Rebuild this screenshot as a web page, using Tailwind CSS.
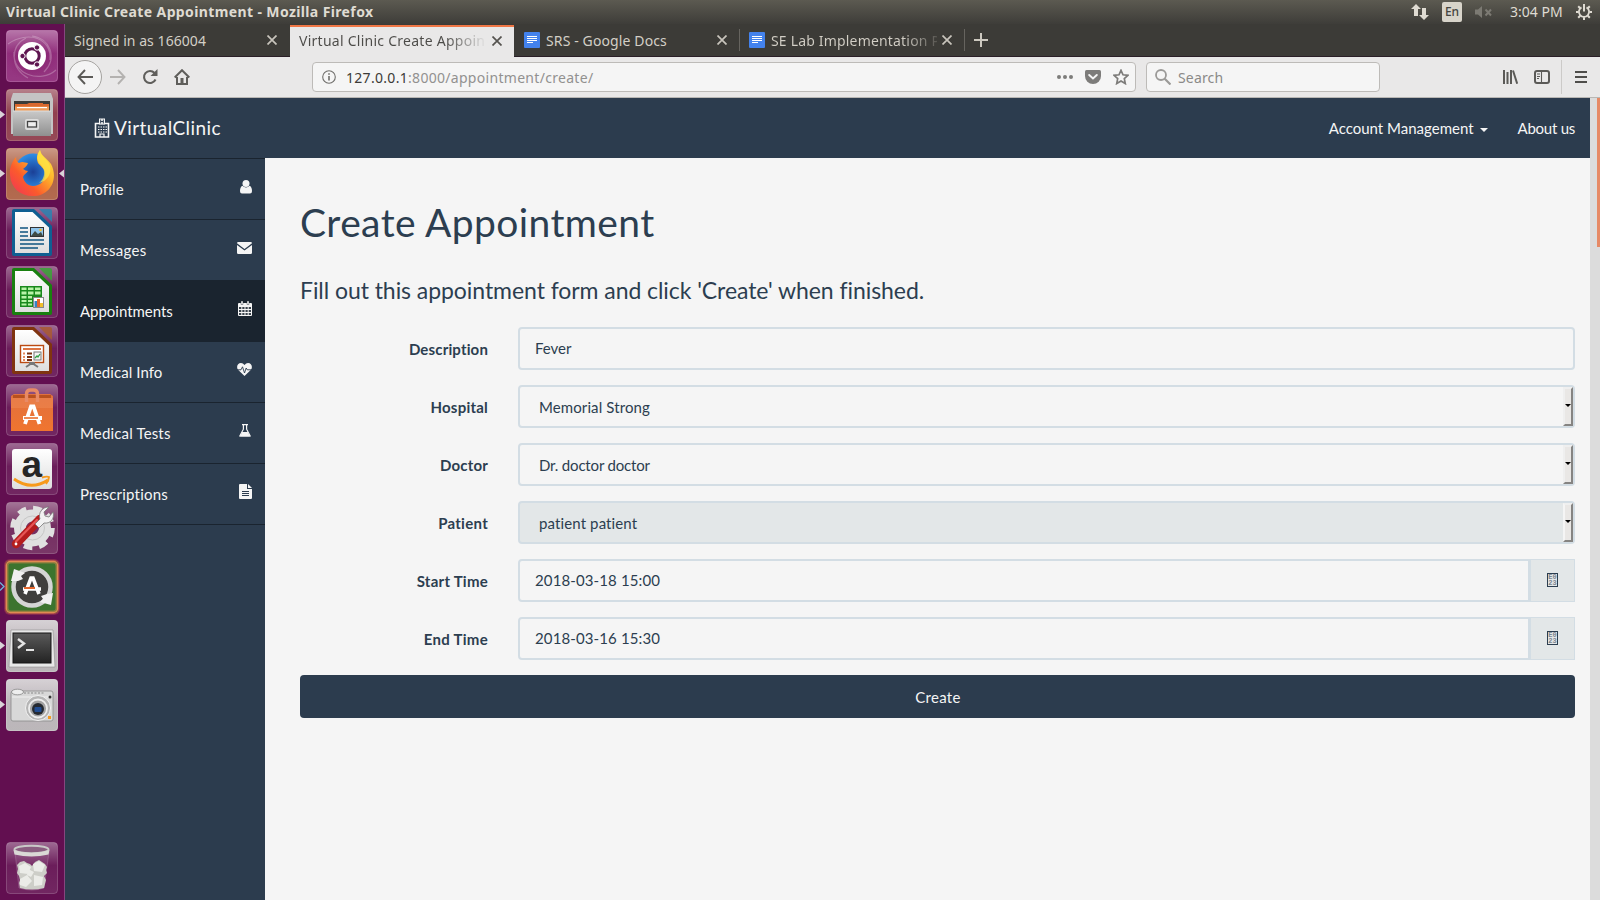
<!DOCTYPE html>
<html lang="en">
<head>
<meta charset="utf-8">
<title>Virtual Clinic Create Appointment</title>
<script src="https://cdn.jsdelivr.net/npm/@tailwindcss/browser@4"></script>
</head>
<body class="flex h-[900px] w-[1600px] flex-col overflow-hidden bg-[#f5f5f5] font-['Noto_Sans',sans-serif]">

<!-- shared gradients and tile chrome -->
<svg class="absolute h-0 w-0" aria-hidden="true">
  <defs>
    <linearGradient id="gloss" x1="0" y1="0" x2="0" y2="1"><stop offset="0" stop-color="#fff" stop-opacity=".38"/><stop offset=".45" stop-color="#fff" stop-opacity=".06"/><stop offset="1" stop-color="#fff" stop-opacity=".1"/></linearGradient>
    <linearGradient id="steel" x1="0" y1="0" x2="0" y2="1"><stop offset="0" stop-color="#c9c9c9"/><stop offset="1" stop-color="#8f8f8f"/></linearGradient>
    <linearGradient id="silver" x1="0" y1="0" x2="0" y2="1"><stop offset="0" stop-color="#bdb5bb"/><stop offset="1" stop-color="#b4afb2"/></linearGradient>
    <linearGradient id="paper" x1="0" y1="0" x2="0" y2="1"><stop offset="0" stop-color="#fff"/><stop offset="1" stop-color="#dedede"/></linearGradient>
    <linearGradient id="fox" x1="1" y1="0" x2="0" y2="1"><stop offset="0" stop-color="#fff04a"/><stop offset=".35" stop-color="#ffb32a"/><stop offset=".65" stop-color="#fb5b2c"/><stop offset="1" stop-color="#f0305c"/></linearGradient>
    <linearGradient id="bag" x1="0" y1="0" x2="0" y2="1"><stop offset="0" stop-color="#e0703f"/><stop offset="1" stop-color="#f0752f"/></linearGradient>
    <radialGradient id="globe"><stop offset="0" stop-color="#1b3f96"/><stop offset="1" stop-color="#2e8fe8"/></radialGradient>
    <radialGradient id="dash"><stop offset="0" stop-color="#7d0f63"/><stop offset="1" stop-color="#8b2375"/></radialGradient>
    <linearGradient id="screen" x1="0" y1="0" x2="0" y2="1"><stop offset="0" stop-color="#5a5a5a"/><stop offset="1" stop-color="#232323"/></linearGradient>
    <g id="tile"><rect x=".5" y=".5" width="51" height="51" rx="3.500" fill="url(#gloss)" stroke="#fff" stroke-opacity=".2"/></g>
    <g id="docpage"><path d="M9 5h17.500L43 20.500V46H9z" fill="url(#paper)"/></g>
  </defs>
</svg>

<!-- desktop panel -->
<header class="flex h-6 shrink-0 items-center bg-linear-to-b from-[#5c5a51] to-[#3e3d39] pl-[6px] text-[#dfdbd2]">
  <div class="w-[1405px] whitespace-nowrap text-[14px] font-bold leading-6 tracking-[0.38px]">Virtual Clinic Create Appointment - Mozilla Firefox</div>
  <svg class="h-4 w-[18px]" viewBox="0 0 18 16" fill="#dfdbd2"><path d="M5 0l5 5H7v7H3V5H0zM13 16l5-5h-3V4h-4v7H8z"/></svg>
  <div class="ml-[13px] h-5 w-5 rounded-[2px] bg-[#d8d4ca] text-center text-[12px] font-medium leading-5 text-[#45443f]">En</div>
  <svg class="ml-[13px] h-[14px] w-[18px]" viewBox="0 0 18 14"><path d="M0 4.500h3l4-3.500v12L3 9.500H0z" fill="#7c7a73"/><path d="M10.500 4.500l5.500 6M16 4.500l-5.500 6" stroke="#7c7a73" stroke-width="2"/></svg>
  <div class="ml-[17px] w-[54px] whitespace-nowrap text-[14px] leading-6">3:04 PM</div>
  <svg class="ml-[12px] h-4 w-4" viewBox="0 0 16 16" fill="none" stroke="#dfdbd2"><path d="M5.500 3.400a5.100 5.100 0 1 0 5 0" stroke-width="1.800"/><path d="M8 0v7.500M0 8h2.600M13.400 8H16M8 13.300V16M2.200 2.200l2 2M13.800 2.200l-2 2M2.200 13.800l2-2M13.800 13.800l-2-2" stroke-width="2"/></svg>
</header>

<div class="flex min-h-0 flex-1">
  <!-- launcher -->
  <aside class="relative flex w-[65px] shrink-0 flex-col gap-[7px] border-r border-[#86467f] bg-[#620f50] pb-[6px] pl-[6px] pt-[6px]">
    <svg class="h-[52px] w-[52px] shrink-0" viewBox="0 0 52 52"><rect width="52" height="52" rx="4" fill="url(#dash)"/><g fill="none" stroke="#fff" stroke-opacity=".25" stroke-width="1.200"><path d="M2 14C22 0 46 8 44 30M50 40C34 54 6 44 8 22M26 6c18 2 26 22 12 36M22 48C4 38 4 16 20 8"/></g><use href="#tile"/><circle cx="26" cy="26" r="14" fill="#fff"/><circle cx="26" cy="26" r="7.200" fill="none" stroke="#5e1550" stroke-width="3"/><g fill="#5e1550" stroke="#fff" stroke-width="1"><circle cx="16.500" cy="26" r="2.700"/><circle cx="31" cy="17.500" r="2.700"/><circle cx="31" cy="34.500" r="2.700"/></g></svg>
    <svg class="h-[52px] w-[52px] shrink-0" viewBox="0 0 52 52"><rect width="52" height="52" rx="4" fill="#8a3444"/><use href="#tile"/><path d="M7 4h38l2 6v35H5V10z" fill="#c4c4c4"/><path d="M8 12h36v12H8z" fill="#3b3b38"/><path d="M9 15h12l2-1h14v1h6v8H9z" fill="#d9682f"/><path d="M9 17.500h34V22H9z" fill="#f09a55"/><path d="M11 18h30v1.200H11z" fill="#fff"/><path d="M7 22h38v25H7z" fill="url(#steel)"/><path d="M7 22h38" stroke="#ddd"/><rect x="19" y="30" width="14" height="11" rx="2" fill="#ddd"/><rect x="21.500" y="32.500" width="9" height="5.500" fill="#eee" stroke="#444" stroke-width="1.300"/></svg>
    <svg class="h-[52px] w-[52px] shrink-0" viewBox="0 0 52 52"><rect width="52" height="52" rx="4" fill="#aa5a3c"/><use href="#tile"/><circle cx="27" cy="24" r="18.500" fill="url(#globe)"/><path d="M4 27C3 20 7 12 10 9c0 3 1 5 3 6 4-2 6 0 9 0-1 3-3 4-5 6 2 1 3 2 5 2-2 3-4 3-5 6 1 5 5 9 10 9 8 0 13-6 12-14-1-4-5-6-7-9-2-5-1-9 2-13 1 6 7 8 11 14 8 15-1 32-18 32C14 48 5 40 4 27z" fill="url(#fox)"/><path d="M34 2c-4 6-3 11 1 15 5 5 4 14-2 18 8-2 13-9 11-17-2-7-9-9-10-16z" fill="#ffe545" fill-opacity=".75"/></svg>
    <svg class="h-[52px] w-[52px] shrink-0" viewBox="0 0 52 52"><use href="#tile"/><path d="M8 2h20l18 17v28q0 2-2 2H8q-2 0-2-2V4q0-2 2-2z" fill="#0f5f92"/><path d="M33 2h11q2 0 2 2v11z" fill="#2a82b0" fill-opacity=".85"/><use href="#docpage"/><path d="M14 21h8M14 25h8M14 29h8M14 33h24M14 37h24M14 41h18" stroke="#0f5480" stroke-width="1.700"/><rect x="24.500" y="20.500" width="13" height="9" fill="#8fc4ea" stroke="#333"/><path d="M25 29l4-5 3 3 3-2 2 4z" fill="#3f4b44"/><circle cx="34.500" cy="23" r="1.300" fill="#f3bb29"/></svg>
    <svg class="h-[52px] w-[52px] shrink-0" viewBox="0 0 52 52"><use href="#tile"/><path d="M8 2h20l18 17v28q0 2-2 2H8q-2 0-2-2V4q0-2 2-2z" fill="#198010"/><path d="M33 2h11q2 0 2 2v11z" fill="#39a536" fill-opacity=".85"/><use href="#docpage"/><rect x="14" y="20" width="22" height="21" fill="#19891d"/><path d="M15.500 21.500h5V24h-5zM22 21.500h5.500V24H22zM29 21.500h5.500V24H29zM15.500 25.500h5v3h-5zM22 25.500h5.500v3H22zM29 25.500h5.500v3H29zM15.500 30h5v2.500h-5zM22 30h4v2.500h-4zM15.500 34h5v2h-5zM22 34h4v2h-4zM15.500 37.500h5v2h-5zM22 37.500h4v2h-4z" fill="#b8f3a8"/><rect x="27.500" y="31.500" width="10" height="10" fill="#fff" stroke="#888"/><path d="M28.500 35h2.500v6h-2.500z" fill="#3583c6"/><path d="M31 33h3v8h-3z" fill="#e4652c"/><path d="M34 37h3v4h-3z" fill="#f0bf2a"/></svg>
    <svg class="h-[52px] w-[52px] shrink-0" viewBox="0 0 52 52"><use href="#tile"/><path d="M8 2h20l18 17v28q0 2-2 2H8q-2 0-2-2V4q0-2 2-2z" fill="#803410"/><path d="M33 2h11q2 0 2 2v11z" fill="#a95a31" fill-opacity=".85"/><use href="#docpage"/><rect x="14.500" y="20.500" width="23" height="17" fill="#fff" stroke="#bb4a12" stroke-width="1.400"/><path d="M17 24h18" stroke="#d9652d" stroke-width="1.800"/><path d="M17 28.500h2M17 32h2M17 35h2" stroke="#e58a5b" stroke-width="2"/><path d="M21 28.500h5M21 32h5M21 35h5" stroke="#7a3210" stroke-width="2"/><rect x="28" y="27" width="7" height="8" fill="#f5f5f5" stroke="#777"/><path d="M29 33l2-2 1 1 2-3" fill="none" stroke="#2fa044" stroke-width="1.300"/><path d="M26 38l-6 4M26 38l6 4M23 38h6" stroke="#777" stroke-width="2"/></svg>
    <svg class="h-[52px] w-[52px] shrink-0" viewBox="0 0 52 52"><use href="#tile"/><path d="M5 12l3-2h36l3 2v35H5z" fill="url(#bag)"/><path d="M7 11h38v3H7z" fill="#b8501f"/><path d="M5 14h42v10H5z" fill="#f08a54" fill-opacity=".5"/><path d="M20.500 18V10q0-4 4-4h3q4 0 4 4v8" fill="none" stroke="#e88a66" stroke-width="3.400"/><path d="M19 40l6-17.500h2.500L33.500 40M17 34h19" fill="none" stroke="#fff" stroke-width="3.800"/><path d="M18 34h14" stroke="#e8641f" stroke-width="1.500"/></svg>
    <svg class="h-[52px] w-[52px] shrink-0" viewBox="0 0 52 52"><use href="#tile"/><rect x="6" y="6" width="40" height="40" rx="3" fill="url(#paper)"/><text x="15.500" y="34" font-family="Liberation Sans" font-weight="700" font-size="37" fill="#262626">a</text><path d="M8 36q17 12 34 1" fill="none" stroke="#f79a1c" stroke-width="2.800"/><path d="M36 34.500q5-1.500 7-.5 0 3-3 7" fill="none" stroke="#f79a1c" stroke-width="1.900"/></svg>
    <svg class="h-[52px] w-[52px] shrink-0" viewBox="0 0 52 52"><rect width="52" height="52" rx="4" fill="#6b2157"/><use href="#tile"/><circle cx="26.500" cy="26" r="12.500" fill="none" stroke="#e0e0e0" stroke-width="12"/><circle cx="26.500" cy="26" r="19.800" fill="none" stroke="#e0e0e0" stroke-width="5" stroke-dasharray="8.600 6.951"/><circle cx="26.500" cy="26" r="12" fill="none" stroke="#c6c6c6" stroke-width="1"/><path d="M10 42L34 17" stroke="#b51d1d" stroke-width="8.500" stroke-linecap="round"/><path d="M10 39.500L31 18" stroke="#e65555" stroke-width="2.200" stroke-linecap="round"/><path d="M29 22l5-5c-2-6 2-12 9-12l-5 5 1 4 4 1 4-5c2 7-3 12-9 11l-5 5z" fill="#f2f2f2" stroke="#777" stroke-width=".8"/><circle cx="10" cy="42" r="1.400" fill="#fff"/></svg>
    <svg class="h-[52px] w-[52px] shrink-0 overflow-visible" viewBox="0 0 52 52"><rect x="-2" y="-2" width="56" height="56" rx="6" fill="#e4724a" fill-opacity=".25"/><rect x="-1" y="-1" width="54" height="54" rx="5" fill="#e4724a" fill-opacity=".45"/><rect width="52" height="52" rx="4" fill="#3c742e"/><rect x=".5" y=".5" width="51" height="51" rx="4" fill="none" stroke="#e08a52" stroke-width="1.400"/><rect x="1.800" y="1.800" width="48.400" height="48.400" rx="3" fill="none" stroke="#e08a52" stroke-opacity=".45" stroke-width="1.400"/><circle cx="26" cy="26" r="18.500" fill="#403f3d" stroke="#d5d5d5" stroke-width="4.500"/><path d="M5 20l3-12 11 4-4 3 2 3-5 2zM47 32l-2 12-11-3 3-3-2-3 6-2z" fill="#f0f0f0"/><path d="M19 33l6-16h2l6 16M17 28h18" fill="none" stroke="#fff" stroke-width="3.600"/><path d="M18 27h11" stroke="#e4662c" stroke-width="2"/></svg>
    <svg class="h-[52px] w-[52px] shrink-0" viewBox="0 0 52 52"><rect width="52" height="52" rx="4" fill="url(#silver)"/><use href="#tile"/><path d="M5 10h42l2 37H3z" fill="#e8e8e8" stroke="#8e8e8e" stroke-width=".6"/><rect x="7" y="13" width="38" height="30" fill="url(#screen)" stroke="#151515"/><path d="M12 19l6 4.500-6 4.500" fill="none" stroke="#e4e4e4" stroke-width="2.400"/><path d="M20 30h8" stroke="#e4e4e4" stroke-width="2"/></svg>
    <svg class="h-[52px] w-[52px] shrink-0" viewBox="0 0 52 52"><rect width="52" height="52" rx="4" fill="url(#silver)"/><use href="#tile"/><rect x="5" y="12" width="42" height="30" rx="2" fill="#d8d8d8" stroke="#8b8b8b" stroke-width=".8"/><path d="M6 18h40" stroke="#f0f0f0"/><ellipse cx="11.500" cy="13" rx="6" ry="2.800" fill="#eee" stroke="#888" stroke-width=".8"/><path d="M18 14h20" stroke="#888" stroke-width="1.200" stroke-dasharray="2 1.500"/><circle cx="32" cy="29" r="12.500" fill="#b5b5b5" stroke="#f2f2f2"/><circle cx="32" cy="29.500" r="9" fill="#a2a2a2" stroke="#eee" stroke-width="1.800"/><circle cx="32" cy="30" r="6" fill="#252a31"/><rect x="28.500" y="28" width="7" height="5" rx="1" fill="#224d91"/><circle cx="44" cy="18" r="1.500" fill="#333"/><rect x="42" y="37" width="3" height="3" fill="#f49a20"/></svg>
    <svg class="mt-auto h-[52px] w-[52px] shrink-0" viewBox="0 0 52 52"><use href="#tile"/><path d="M9 10l4 36q13 4 25 0l5-36z" fill="#fff" fill-opacity=".08" stroke="#ba8bb0" stroke-opacity=".6" stroke-width=".6"/><path d="M11 23l3-3 4-1 3 2 3 1 2 2 3-4 4-2 3 2 3 2 2 3-1 3 1 3-3 3 2 4-1 4-1 4q-12 3-24 0l-1-5 1-3-1-4-2-3 1-4z" fill="#cdcec8"/><path d="M13 24l6-3 6 4-3 7-8-1zM27 22l6-3 6 4-3 7-8-1zM14 37l7-4 5 6-6 6-6-2zM28 33l9 2-1 8-8 1zM22 27l6 3-3 5-4-2z" fill="#ebece8"/><ellipse cx="25.500" cy="7.500" rx="17" ry="3.800" fill="#8a5e80" stroke="#c9c9c7" stroke-width="2"/><path d="M7.500 8q18 6 36 0l-1 4.500q-17 4-34 0z" fill="#dad9d6"/></svg>
    <!-- running markers -->
    <svg class="absolute left-0 top-0 h-[876px] w-16" viewBox="0 0 64 876" fill="#d9d3d8"><path d="M0 86.500l5 4-5 4zM0 145.500l5 4-5 4zM64 145.500l-5 4 5 4zM0 617.500l5 4-5 4zM0 676.500l5 4-5 4z"/><path d="M0 558.500l4 4-4 4" fill="none" stroke="#6db3dc" stroke-width="1.300"/></svg>
  </aside>

  <!-- browser window -->
  <div class="flex min-w-0 flex-1 flex-col">
    <div class="flex h-[33px] shrink-0 border-b border-[#2a1f27] bg-[#3c3b37] text-[14px] text-[#d3cfc6]">
      <div class="flex w-[225px] items-center pl-[9px] pr-[13px]">
        <span class="flex-1 whitespace-nowrap pt-[2px] leading-[30px] tracking-[0.06px]">Signed in as 166004</span>
        <svg class="h-[10px] w-[10px]" viewBox="0 0 10 10"><path d="M.5 .5l9 9M9.500 .5l-9 9" stroke="#c8c4bc" stroke-width="1.700"/></svg>
      </div>
      <div class="-mb-px mt-px flex w-[224px] items-center border-t-2 border-[#f07746] bg-[#e9e8e8] pb-[3px] pl-[9px] pr-[12px] text-[#45443f]">
        <span class="w-[188px] whitespace-nowrap bg-linear-to-r from-[#4c4b48] from-78% to-transparent bg-clip-text leading-7 tracking-[0.26px] text-transparent">Virtual Clinic Create Appoin</span>
        <svg class="ml-[5px] h-[10px] w-[10px] shrink-0" viewBox="0 0 10 10"><path d="M.5 .5l9 9M9.500 .5l-9 9" stroke="#55534f" stroke-width="1.700"/></svg>
      </div>
      <div class="flex w-[225px] items-center pl-[10px] pr-[12px]">
        <svg class="h-4 w-4" viewBox="0 0 16 16"><rect width="16" height="16" rx="1" fill="#4382ed"/><path d="M3 4.500h10M3 6.500h10M3 8.500h10M3 10.500h6" stroke="#fff"/></svg>
        <span class="flex-1 whitespace-nowrap pl-[6px] pt-[2px] leading-[30px] tracking-[0.12px]">SRS - Google Docs</span>
        <svg class="h-[10px] w-[10px]" viewBox="0 0 10 10"><path d="M.5 .5l9 9M9.500 .5l-9 9" stroke="#c8c4bc" stroke-width="1.700"/></svg>
      </div>
      <div class="my-[5px] w-px bg-[#66645f]"></div>
      <div class="flex w-[224px] items-center pl-[9px] pr-[12px]">
        <svg class="h-4 w-4 shrink-0" viewBox="0 0 16 16"><rect width="16" height="16" rx="1" fill="#4382ed"/><path d="M3 4.500h10M3 6.500h10M3 8.500h10M3 10.500h6" stroke="#fff"/></svg>
        <span class="ml-[6px] w-[166px] whitespace-nowrap bg-linear-to-r from-[#d3cfc6] from-80% to-[#3c3b37] to-105% bg-clip-text pt-[2px] leading-[30px] tracking-[0.18px] text-transparent">SE Lab Implementation P</span>
        <svg class="ml-[5px] h-[10px] w-[10px] shrink-0" viewBox="0 0 10 10"><path d="M.5 .5l9 9M9.500 .5l-9 9" stroke="#c8c4bc" stroke-width="1.700"/></svg>
      </div>
      <div class="my-[5px] w-px bg-[#66645f]"></div>
      <svg class="ml-[9px] mt-[9px] h-[14px] w-[14px]" viewBox="0 0 14 14"><path d="M7 0v14M0 7h14" stroke="#cdc9c0" stroke-width="2"/></svg>
    </div>

    <div class="flex h-[41px] shrink-0 items-center border-b border-[#b9b7b4] bg-[#e9e8e8] pl-[3px]">
      <div class="flex h-[34px] w-[34px] items-center justify-center rounded-full border border-[#a5a3a0] bg-[#f4f4f4]">
        <svg class="h-4 w-4" viewBox="0 0 16 16" fill="none" stroke="#5b5a57" stroke-width="1.900"><path d="M8 1L1.500 8 8 15M1.500 8H16"/></svg>
      </div>
      <svg class="ml-[8px] h-4 w-4" viewBox="0 0 16 16" fill="none" stroke="#b4b2b0" stroke-width="1.900"><path d="M8 1l6.500 7L8 15M14.500 8H0"/></svg>
      <svg class="ml-[16px] h-4 w-4" viewBox="0 0 16 16"><path d="M13.500 10.500A6 6 0 1 1 12.500 4" fill="none" stroke="#5f5e5b" stroke-width="2.100"/><path d="M15.500 0v7h-7z" fill="#5f5e5b"/></svg>
      <svg class="ml-[16px] h-4 w-4" viewBox="0 0 16 16"><path d="M.7 8.500L8 1.200l7.300 7.300M3 8v7h10V8" fill="none" stroke="#5f5e5b" stroke-width="2"/><path d="M6.500 9h3v6h-3z" fill="#5f5e5b"/></svg>

      <div class="ml-[122px] flex h-[30px] w-[824px] items-center rounded-[4px] border border-[#bdbbb8] bg-[#f5f5f5] pl-[9px] pr-[6px]">
        <svg class="h-[14px] w-[14px]" viewBox="0 0 14 14" fill="none" stroke="#6f6e6b"><circle cx="7" cy="7" r="6.300" stroke-width="1.100"/><path d="M7 6v4.500M7 3.200v1.600" stroke-width="1.600"/></svg>
        <div class="ml-[10px] flex-1 whitespace-nowrap pt-[2px] text-[14px] leading-[26px] tracking-[0.3px] text-[#929190]"><span class="text-[#3c3b37]">127.0.0.1</span>:8000/appointment/create/</div>
        <svg class="h-4 w-4" viewBox="0 0 16 16" fill="#7d7c7a"><circle cx="2" cy="8" r="2"/><circle cx="8" cy="8" r="2"/><circle cx="14" cy="8" r="2"/></svg>
        <svg class="ml-[12px] h-4 w-4" viewBox="0 0 16 16"><path d="M1.500 1h13q1.500 0 1.500 1.500V7a8 8 0 0 1-16 0V2.500Q0 1 1.500 1z" fill="#7d7c7a"/><path d="M4.200 6L8 9.500 11.800 6" fill="none" stroke="#f5f5f5" stroke-width="2" stroke-linecap="round"/></svg>
        <svg class="ml-[12px] h-4 w-4" viewBox="0 0 16 16"><path d="M8 1.300l2 4.500 5 .5-3.700 3.300 1 5L8 12.100l-4.300 2.500 1-5L1 6.300l5-.5z" fill="none" stroke="#7d7c7a" stroke-width="1.700"/></svg>
      </div>
      <div class="ml-[10px] flex h-[30px] w-[234px] items-center rounded-[4px] border border-[#bdbbb8] bg-[#f5f5f5] pl-[8px]">
        <svg class="h-4 w-4" viewBox="0 0 16 16" fill="none" stroke="#9b9a98"><circle cx="6" cy="6" r="5" stroke-width="1.800"/><path d="M9.700 9.700L15.500 15.500" stroke-width="2.200"/></svg>
        <span class="ml-[7px] pt-[2px] text-[14px] leading-[26px] tracking-[0.15px] text-[#8b8a88]">Search</span>
      </div>
      <svg class="ml-[122px] h-4 w-4" viewBox="0 0 16 16" stroke="#5b5a57" stroke-width="2" fill="none"><path d="M2 1v14M5.500 3v12M9 1v14M11 1.500l4.200 13.200"/></svg>
      <svg class="ml-[16px] h-4 w-4" viewBox="0 0 16 16" fill="none" stroke="#5b5a57"><rect x="1" y="2" width="14" height="12" rx="2" stroke-width="2"/><path d="M7.500 2v12M3 5h3M3 7.500h3M3 9.500h2" stroke-width="1.100"/></svg>
      <div class="ml-[11px] h-[34px] w-px bg-[#cccac8]"></div>
      <svg class="ml-[13px] h-[12px] w-[12px]" viewBox="0 0 12 12"><path d="M0 1h12M0 6h12M0 11h12" stroke="#4f4e4b" stroke-width="2"/></svg>
    </div>

    <!-- page -->
    <div class="flex min-h-0 flex-1">
      <div class="flex min-w-0 flex-1 flex-col font-[Lato,sans-serif] text-[15px] text-[#2c3e50]">
        <nav class="flex h-[60px] shrink-0 items-center bg-[#2c3c4e] pl-[29px] pr-[15px] text-[#f5f5f5]">
          <svg class="h-5 w-4" viewBox="0 0 16 20"><path d="M1.500 5.500h13v13.500h-13z" fill="none" stroke="#f5f5f5" stroke-width="1.600"/><path d="M5 .5h6v6H5z" fill="#f5f5f5"/><path d="M6.700 1.500v4M9.300 1.500v4M6.700 3.500h2.600" stroke="#2c3c4e"/><path d="M4 9h1.500M6.500 9H8M9 9h1.500M11.500 9H13M4 11.500h1.500M6.500 11.500H8M9 11.500h1.500M11.500 11.500H13M4 14h1.500M6.500 14H8M9 14h1.500M11.500 14H13" stroke="#f5f5f5" stroke-width="1.200"/><path d="M6 19v-3h4v3" fill="none" stroke="#f5f5f5" stroke-width="1.200"/></svg>
          <span class="ml-[4px] flex-1 text-[19px] leading-[60px] tracking-[0.42px]">VirtualClinic</span>
          <span class="leading-[60px]">Account Management</span>
          <svg class="ml-[6px] mt-1 h-1 w-2" viewBox="0 0 8 4" fill="#f5f5f5"><path d="M0 0h8L4 4z"/></svg>
          <span class="ml-[30px] leading-[60px] tracking-[-0.25px]">About us</span>
        </nav>
        <div class="flex min-h-0 flex-1">
          <aside class="flex w-[200px] shrink-0 flex-col bg-[#2c3c4e] text-[#f5f5f5]">
            <a class="flex h-[61px] items-center justify-between border-t border-[#1a242f] pl-[15px] pr-[13px]"><span class="tracking-[0.15px]">Profile</span><svg class="mb-1 h-[14px] w-3" viewBox="0 0 12 14" fill="#f5f5f5"><circle cx="6" cy="3.600" r="3.500"/><path d="M2.500 5.800C.5 6.500 0 9 0 11.200Q0 13.500 2 13.500h8q2 0 2-2.300C12 9 11.500 6.500 9.500 5.800 7.500 8 4.500 8 2.500 5.800z"/></svg></a>
            <a class="flex h-[61px] items-center justify-between border-t border-[#1a242f] pl-[15px] pr-[13px]"><span class="tracking-[0.3px]">Messages</span><svg class="mb-1 h-3 w-[15px]" viewBox="0 0 15 12" fill="#f5f5f5"><path d="M1.300 0h12.400Q15 0 15 1.300L7.500 7 0 1.300Q0 0 1.300 0zM0 3l7.500 5.500L15 3v7.700Q15 12 13.700 12H1.300Q0 12 0 10.700z"/></svg></a>
            <a class="flex h-[62px] items-center justify-between bg-[#1a242f] pl-[15px] pr-[13px]"><span class="tracking-[-0.03px]">Appointments</span><svg class="mb-[6px] h-[15px] w-[14px]" viewBox="0 0 14 15"><path d="M1 2h12q1 0 1 1v11q0 1-1 1H1q-1 0-1-1V3q0-1 1-1z" fill="#f5f5f5"/><path d="M3 0h2v3.500H3zM9 0h2v3.500H9z" fill="#f5f5f5" stroke="#1a242f" stroke-width=".4"/><path d="M1 6h2.300v2H1zM4.300 6h2.200v2H4.300zM7.500 6h2.200v2H7.500zM10.700 6H13v2h-2.300zM1 9h2.300v2H1zM4.300 9h2.200v2H4.300zM7.500 9h2.200v2H7.500zM10.700 9H13v2h-2.300zM1 12h2.300v2H1zM4.300 12h2.200v2H4.300zM7.500 12h2.200v2H7.500zM10.700 12H13v2h-2.300z" fill="#1a242f" fill-opacity=".85"/></svg></a>
            <a class="flex h-[60px] items-center justify-between pl-[15px] pr-[13px]"><span class="tracking-[0.08px]">Medical Info</span><svg class="mb-[5px] h-[13px] w-[15px]" viewBox="0 0 15 13"><path d="M7.500 13L1 6.800C-1 4 .5 0 4 0q2 0 3.500 2Q9 0 11 0c3.500 0 5 4 3 6.800z" fill="#f5f5f5"/><path d="M0 6.800h4l1.500-3L7.500 10l1.700-5 1 1.800H15" fill="none" stroke="#2c3c4e" stroke-width=".9"/></svg></a>
            <a class="flex h-[61px] items-center justify-between border-t border-[#1a242f] pl-[15px] pr-[14px]"><span class="tracking-[0.16px]">Medical Tests</span><svg class="mb-[6px] h-[13px] w-3" viewBox="0 0 12 13"><path d="M3 .6h6M4.400 .6v4.600L.8 12h10.400L7.600 5.200V.6" fill="none" stroke="#f5f5f5" stroke-width="1.200"/><path d="M3.200 8h5.600l2.200 4.500H1z" fill="#f5f5f5"/></svg></a>
            <a class="flex h-[62px] items-center justify-between border-y border-[#1a242f] pl-[15px] pr-[13px]"><span class="tracking-[0.2px]">Prescriptions</span><svg class="mb-[6px] h-[15px] w-[13px]" viewBox="0 0 13 15"><path d="M1 0h7v5h5v9q0 1-1 1H1q-1 0-1-1V1q0-1 1-1zM9 0l4 4H9z" fill="#f5f5f5"/><path d="M3 7.500h7M3 9.500h7M3 11.500h7" stroke="#2c3c4e"/></svg></a>
          </aside>

          <main class="flex flex-1 flex-col bg-[#f5f5f5] pl-[35px] pr-[15px]">
            <h1 class="mt-[43px] h-[43px] whitespace-nowrap text-[39px] leading-[43px] tracking-[0.4px]">Create Appointment</h1>
            <h3 class="mt-[33px] h-[26px] whitespace-nowrap text-[23px] leading-[26px] tracking-[-0.06px]">Fill out this appointment form and click 'Create' when finished.</h3>
            <form class="mt-[24px] flex flex-col gap-[15px]">
              <div class="flex h-[43px]"><label class="w-[188px] pt-[12px] text-right font-bold leading-[21px] tracking-[0.15px]">Description</label><div class="ml-[30px] flex-1 rounded-[4px] border-2 border-[#d3dde4] pl-[15px] leading-[38px]">Fever</div></div>
              <div class="flex h-[43px]"><label class="w-[188px] pt-[12px] text-right font-bold leading-[21px] tracking-[0.22px]">Hospital</label><div class="ml-[30px] flex flex-1 justify-between rounded-[4px] border-2 border-[#d3dde4] pl-[19px] leading-10"><span class="tracking-[0.1px]">Memorial Strong</span><span class="flex w-[10px] items-center justify-end border-2 border-b-[#868482] border-l-[#efefef] border-r-[#868482] border-t-[#efefef] bg-[#e9e7e5]"><svg class="mb-[2px] h-[3px] w-[6px]" viewBox="0 0 6 3"><path d="M0 0h6L3 3z"/></svg></span></div></div>
              <div class="flex h-[43px]"><label class="w-[188px] pt-[12px] text-right font-bold leading-[21px] tracking-[0.2px]">Doctor</label><div class="ml-[30px] flex flex-1 justify-between rounded-[4px] border-2 border-[#d3dde4] pl-[19px] leading-10"><span class="tracking-[-0.17px]">Dr. doctor doctor</span><span class="flex w-[10px] items-center justify-end border-2 border-b-[#868482] border-l-[#efefef] border-r-[#868482] border-t-[#efefef] bg-[#e9e7e5]"><svg class="mb-[2px] h-[3px] w-[6px]" viewBox="0 0 6 3"><path d="M0 0h6L3 3z"/></svg></span></div></div>
              <div class="flex h-[43px]"><label class="w-[188px] pt-[12px] text-right font-bold leading-[21px] tracking-[0.28px]">Patient</label><div class="ml-[30px] flex flex-1 justify-between rounded-[4px] border-2 border-[#d3dde4] bg-[#e3e7e8] pl-[19px] leading-10"><span class="tracking-[0.12px]">patient patient</span><span class="flex w-[10px] items-center justify-end border-2 border-b-[#868482] border-l-[#f5f5f5] border-r-[#868482] border-t-[#efefef] bg-[#e9e7e5]"><svg class="mb-[2px] h-[3px] w-[6px]" viewBox="0 0 6 3"><path d="M0 0h6L3 3z"/></svg></span></div></div>
              <div class="flex h-[43px]"><label class="w-[188px] pt-[12px] text-right font-bold leading-[21px] tracking-[0.25px]">Start Time</label><div class="ml-[30px] flex-1 rounded-l-[4px] border-2 border-r-[3px] border-[#d3dde4] pl-[15px] leading-[38px] tracking-[0.12px]">2018-03-18 15:00</div><div class="flex w-11 items-center justify-center border border-l-0 border-[#d3dde4] bg-[#e3e7e8]"><span class="mb-[2px] flex h-[14px] w-[11px] flex-col items-center border border-[#2c3e50] font-['Liberation_Mono',monospace] text-[7px] font-bold leading-[6px] text-[#7b8690]"><span>E0</span><span>23</span></span></div></div>
              <div class="flex h-[43px]"><label class="w-[188px] pt-[12px] text-right font-bold leading-[21px] tracking-[0.28px]">End Time</label><div class="ml-[30px] flex-1 rounded-l-[4px] border-2 border-r-[3px] border-[#d3dde4] pl-[15px] leading-[38px] tracking-[0.12px]">2018-03-16 15:30</div><div class="flex w-11 items-center justify-center border border-l-0 border-[#d3dde4] bg-[#e3e7e8]"><span class="mb-[2px] flex h-[14px] w-[11px] flex-col items-center border border-[#2c3e50] font-['Liberation_Mono',monospace] text-[7px] font-bold leading-[6px] text-[#7b8690]"><span>E0</span><span>23</span></span></div></div>
              <button type="button" class="h-[43px] rounded-[4px] bg-[#2c3c4e] pl-[1px] pt-[2px] tracking-[0.3px] text-[#f5f5f5]">Create</button>
            </form>
          </main>
        </div>
      </div>
      <div class="flex w-[10px] justify-end bg-[#dcdcdc]"><div class="h-[149px] w-[3px] bg-[#e68a66]"></div></div>
    </div>
  </div>
</div>
</body>
</html>
